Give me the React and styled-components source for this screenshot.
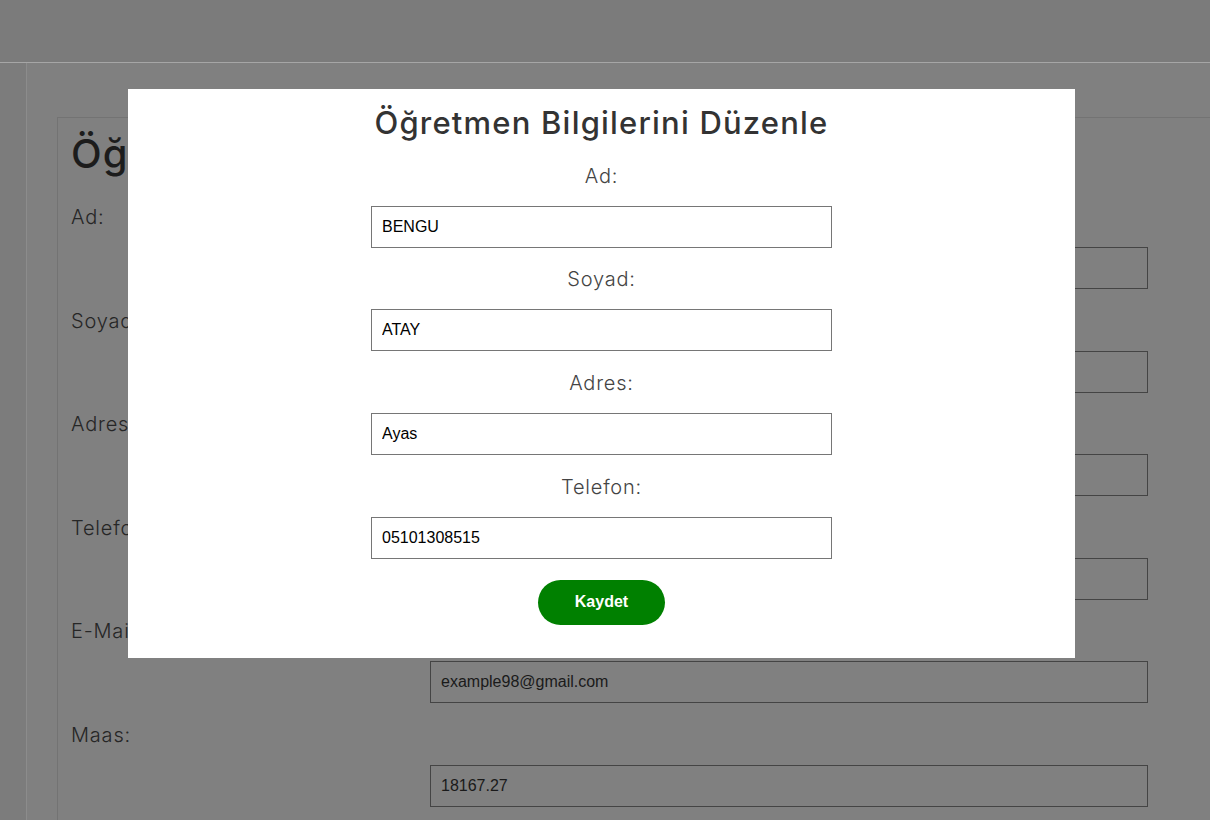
import styled, { createGlobalStyle } from "styled-components";

const GlobalStyle = createGlobalStyle`
  html, body {
    margin: 0;
    padding: 0;
    height: 100%;
    overflow: hidden;
    background: #808080;
  }
  * {
    box-sizing: border-box;
  }
`;

const teacher = {
  ad: "BENGU",
  soyad: "ATAY",
  adres: "Ayas",
  telefon: "05101308515",
  email: "example98@gmail.com",
  maas: "18167.27",
};

const pageFields = [
  { label: "Ad:", value: teacher.ad },
  { label: "Soyad:", value: teacher.soyad },
  { label: "Adres:", value: teacher.adres },
  { label: "Telefon:", value: teacher.telefon },
  { label: "E-Mail:", value: teacher.email },
  { label: "Maas:", value: teacher.maas },
];

const modalFields = [
  { label: "Ad:", value: teacher.ad },
  { label: "Soyad:", value: teacher.soyad },
  { label: "Adres:", value: teacher.adres },
  { label: "Telefon:", value: teacher.telefon },
];

const App = () => {
  return (
    <>
      <GlobalStyle />
      <Page>
        <TopBar />
        <Body>
          <SideBar />
          <Main>
            <Panel>
              <PanelTitle>Öğretmen Bilgileri</PanelTitle>
              {pageFields.map((f) => (
                <PageRow key={f.label}>
                  <PageLabel>{f.label}</PageLabel>
                  <PageInput readOnly value={f.value} />
                </PageRow>
              ))}
            </Panel>
          </Main>
        </Body>
      </Page>

      <Overlay>
        <Modal>
          <ModalTitle>Öğretmen Bilgilerini Düzenle</ModalTitle>
          <ModalForm onSubmit={(e) => e.preventDefault()}>
            {modalFields.map((f) => (
              <Field key={f.label}>
                <FieldLabel>{f.label}</FieldLabel>
                <FieldInput defaultValue={f.value} />
              </Field>
            ))}
            <SaveButton type="submit">Kaydet</SaveButton>
          </ModalForm>
        </Modal>
      </Overlay>
    </>
  );
};

const Page = styled.div`
  height: 100vh;
  display: flex;
  flex-direction: column;
  overflow: hidden;
  background: #808080;
`;

const TopBar = styled.header`
  height: 63px;
  flex-shrink: 0;
  background: #7b7b7b;
  border-bottom: 1px solid #a6a6a6;
`;

const Body = styled.div`
  flex: 1;
  display: flex;
  min-height: 0;
`;

const SideBar = styled.aside`
  width: 27px;
  flex-shrink: 0;
  background: #7c7c7c;
  border-right: 1px solid #8c8c8c;
`;

const Main = styled.main`
  flex: 1;
  padding: 54px 0 0 30px;
  min-width: 0;
`;

const Panel = styled.section`
  width: 1300px;
  border: 1px solid #737373;
  padding: 12px 13px 20px;
  font-family: Inter, "Noto Sans", sans-serif;
`;

const PanelTitle = styled.h1`
  margin: 0 0 27px;
  font-size: 40px;
  line-height: 48px;
  font-weight: 500;
  letter-spacing: 1px;
  color: #1c1c1c;
  white-space: nowrap;
`;

const PageRow = styled.div`
  display: flex;
  flex-direction: column;
  margin-bottom: 19.6px;
`;

const PageLabel = styled.label`
  font-size: 20px;
  line-height: 24px;
  font-weight: 300;
  letter-spacing: 0.8px;
  color: #262626;
  margin-bottom: 18px;
`;

const PageInput = styled.input`
  margin-left: 359px;
  width: 718px;
  height: 42px;
  padding: 0 10px;
  border: 1px solid #444444;
  background: transparent;
  font-family: "Liberation Sans", Arial, sans-serif;
  font-size: 16px;
  color: #1a1a1a;
  outline: none;
`;

const Overlay = styled.div`
  position: fixed;
  inset: 0;
`;

const Modal = styled.div`
  position: absolute;
  left: 128px;
  top: 89px;
  width: 947px;
  height: 569px;
  background: #ffffff;
  display: flex;
  flex-direction: column;
  align-items: center;
  font-family: Inter, "Noto Sans", sans-serif;
`;

const ModalTitle = styled.h2`
  margin: 15px 0 3px;
  font-size: 31px;
  line-height: 37px;
  font-weight: 500;
  letter-spacing: 1.2px;
  color: #333333;
`;

const ModalForm = styled.form`
  display: flex;
  flex-direction: column;
  align-items: center;
`;

const Field = styled.div`
  display: flex;
  flex-direction: column;
  align-items: center;
`;

const FieldLabel = styled.label`
  margin: 19.7px 0 17px;
  font-size: 20px;
  line-height: 25px;
  font-weight: 300;
  letter-spacing: 0.8px;
  color: #444444;
`;

const FieldInput = styled.input`
  width: 461px;
  height: 42px;
  padding: 0 10px;
  border: 1px solid #767676;
  background: #ffffff;
  font-family: "Liberation Sans", Arial, sans-serif;
  font-size: 16px;
  color: #000000;
  outline: none;
`;

const SaveButton = styled.button`
  margin-top: 21px;
  width: 127px;
  height: 45px;
  border: none;
  border-radius: 23px;
  background: #008000;
  color: #ffffff;
  font-family: "Liberation Sans", Arial, sans-serif;
  font-size: 16px;
  font-weight: 700;
  cursor: pointer;
`;

export default App;
